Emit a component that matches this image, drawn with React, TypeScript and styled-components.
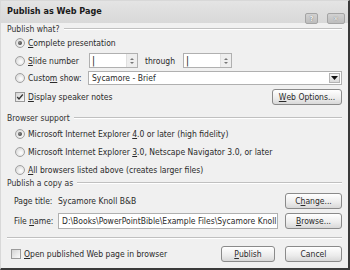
import React from 'react'
import styled, { createGlobalStyle } from 'styled-components'

const GlobalStyle = createGlobalStyle`
  html, body {
    margin: 0;
    padding: 0;
    background: #ffffff;
  }
  * {
    box-sizing: border-box;
  }
`

function Radio({ checked }: { checked?: boolean }) {
  return (
    <StyledRadio>
      {checked && <span className={'dot'} />}
    </StyledRadio>
  )
}

function Check({ checked }: { checked?: boolean }) {
  return (
    <StyledCheck>
      {checked && (
        <svg width="8" height="8" viewBox="0 0 8 8">
          <path d="M1.2 4 L3 6 L6.8 1.5" fill="none" stroke="#333" strokeWidth="1.3" />
        </svg>
      )}
    </StyledCheck>
  )
}

function Spin({ width }: { width: number }) {
  return (
    <SpinBox width={width}>
      <div className={'caret'}>|</div>
      <div className={'arrows'}>
        <svg width="6" height="10" viewBox="0 0 6 10">
          <path d="M1 4 L3 2 L5 4 Z M1 6 L3 8 L5 6 Z" fill="#777" />
        </svg>
      </div>
    </SpinBox>
  )
}

function App() {
  return (
    <>
      <GlobalStyle />
      <Dialog>
        <TitleBar>
          <span className={'title'}>Publish as Web Page</span>
          <div className={'controls'}>
            <CaptionButton width={13}>?</CaptionButton>
            <CaptionButton width={18}>✕</CaptionButton>
          </div>
        </TitleBar>
        <Body>
          <GroupHeader>Publish what?</GroupHeader>
          <Group>
            <Row height={14} top={1}>
              <Radio checked />
              <Label>
                <u>C</u>omplete presentation
              </Label>
            </Row>
            <Row height={15} top={3}>
              <OptionLabel width={74}>
                <Radio />
                <Label>
                  <u>S</u>lide number
                </Label>
              </OptionLabel>
              <Spin width={49} />
              <Through>through</Through>
              <Spin width={49} />
            </Row>
            <Row height={14} top={3}>
              <OptionLabel width={73}>
                <Radio />
                <Label>
                  Custo<u>m</u> show:
                </Label>
              </OptionLabel>
              <SelectBox>
                <span>Sycamore - Brief</span>
                <div className={'drop'}>
                  <svg width="7" height="4" viewBox="0 0 7 4">
                    <path d="M0 0 L7 0 L3.5 4 Z" fill="#111" />
                  </svg>
                </div>
              </SelectBox>
            </Row>
            <Row height={16} top={4}>
              <Check checked />
              <Label>
                <u>D</u>isplay speaker notes
              </Label>
              <Spacer />
              <Button width={70}>
                <u>W</u>eb Options...
              </Button>
            </Row>
          </Group>

          <GroupHeader top={7}>Browser support</GroupHeader>
          <Group>
            <Row height={14} top={3}>
              <Radio checked />
              <Label>
                Microsoft Internet Explorer <u>4</u>.0 or later (high fidelity)
              </Label>
            </Row>
            <Row height={14} top={4}>
              <Radio />
              <Label>
                Microsoft Internet Explorer <u>3</u>.0, Netscape Navigator 3.0, or later
              </Label>
            </Row>
            <Row height={14} top={4}>
              <Radio />
              <Label>
                <u>A</u>ll browsers listed above (creates larger files)
              </Label>
            </Row>
          </Group>

          <GroupHeader>Publish a copy as</GroupHeader>
          <Group indent={7}>
            <Row height={15} top={4}>
              <FieldLabel>Page title:</FieldLabel>
              <span>Sycamore Knoll B&amp;B</span>
              <Spacer />
              <Button width={57}>
                C<u>h</u>ange...
              </Button>
            </Row>
            <Row height={16} top={5}>
              <FieldLabel>
                File <u>n</u>ame:
              </FieldLabel>
              <TextBox>
                <span>D:\Books\PowerPointBible\Example Files\Sycamore Knoll B&amp;B</span>
              </TextBox>
              <Spacer />
              <Button width={57}>
                <u>B</u>rowse...
              </Button>
            </Row>
          </Group>

          <Separator />

          <Row height={17} top={6} style={{ paddingLeft: 4 }}>
            <Check />
            <Label>
              <u>O</u>pen published Web page in browser
            </Label>
            <Spacer />
            <Button width={54}>
              <u>P</u>ublish
            </Button>
            <Button width={57} style={{ marginLeft: 10 }}>
              Cancel
            </Button>
          </Row>
        </Body>
      </Dialog>
    </>
  )
}

export default App

const Dialog = styled.div`
  width: 350px;
  height: 270px;
  display: flex;
  flex-direction: column;
  background: #f0f0f0;
  border-top: 1px solid #d8d8d8;
  border-left: 1px solid #d8d8d8;
  border-right: 2px solid #3a3a3a;
  border-bottom: 2px solid #3a3a3a;
  font-family: 'DejaVu Sans Condensed', 'DejaVu Sans', sans-serif;
  font-size: 8.5px;
  color: #2a2a2a;
  overflow: hidden;
`

const TitleBar = styled.div`
  height: 22px;
  flex-shrink: 0;
  display: flex;
  align-items: center;
  padding: 0 3px 0 6px;
  background: linear-gradient(#e4e4e4, #d8d8d8);

  .title {
    font-size: 9px;
    font-weight: bold;
    color: #1a1a1a;
    margin-top: -2px;
  }

  .controls {
    margin-left: auto;
    align-self: flex-end;
    margin-bottom: -1px;
    display: flex;
    gap: 9px;
  }
`

const CaptionButton = styled.div<{ width: number }>`
  width: ${({ width }) => width}px;
  height: 11px;
  border: 1px solid #a4a4a4;
  border-radius: 2px;
  background: linear-gradient(#d2d2d2, #bdbdbd);
  color: #f4f4f4;
  font-size: 7px;
  font-weight: bold;
  display: flex;
  align-items: center;
  justify-content: center;
  text-shadow: 0 0 1px #555;
`

const Body = styled.div`
  display: flex;
  flex-direction: column;
  padding: 0 6px 0 6px;
`

const GroupHeader = styled.div<{ top?: number }>`
  display: flex;
  align-items: center;
  height: 12px;
  margin-top: ${({ top }) => top || 0}px;
  gap: 4px;
  color: #333;

  &::after {
    content: '';
    flex: 1;
    height: 0;
    border-top: 1px solid #c0c0c0;
    border-bottom: 1px solid #ffffff;
  }
`

const Group = styled.div<{ indent?: number }>`
  display: flex;
  flex-direction: column;
  padding-left: ${({ indent }) => (indent === undefined ? 8 : indent)}px;
`

const Row = styled.div<{ height: number; top?: number }>`
  display: flex;
  align-items: center;
  height: ${({ height }) => height}px;
  margin-top: ${({ top }) => top || 0}px;
  white-space: nowrap;
`

const OptionLabel = styled.div<{ width: number }>`
  display: flex;
  align-items: center;
  width: ${({ width }) => width}px;
  flex-shrink: 0;
`

const Label = styled.span`
  margin-left: 3px;
  white-space: nowrap;
`

const Through = styled.span`
  margin-left: 7px;
  width: 38px;
  flex-shrink: 0;
`

const FieldLabel = styled.span`
  width: 44px;
  flex-shrink: 0;
  white-space: nowrap;
`

const Spacer = styled.div`
  flex: 1;
`

const StyledRadio = styled.div`
  width: 10px;
  height: 10px;
  flex-shrink: 0;
  border-radius: 50%;
  border: 1px solid #a0a0a0;
  background: radial-gradient(circle at 60% 60%, #ffffff, #d0d0d0);
  display: flex;
  align-items: center;
  justify-content: center;

  .dot {
    width: 4px;
    height: 4px;
    border-radius: 50%;
    background: radial-gradient(circle at 40% 40%, #8a8a8a, #2c2c2c);
  }
`

const StyledCheck = styled.div`
  width: 10px;
  height: 10px;
  flex-shrink: 0;
  border: 1px solid #9a9a9a;
  background: linear-gradient(135deg, #d4d4d4, #fbfbfb);
  display: flex;
  align-items: center;
  justify-content: center;
`

const SpinBox = styled.div<{ width: number }>`
  width: ${({ width }) => width}px;
  height: 15px;
  flex-shrink: 0;
  border: 1px solid #b0b0b0;
  background: #ffffff;
  display: flex;
  align-items: center;

  .caret {
    flex: 1;
    padding-left: 2px;
    font-size: 10px;
    color: #222;
  }

  .arrows {
    width: 11px;
    height: 13px;
    border-left: 1px solid #e0e0e0;
    background: #eeeeee;
    display: flex;
    align-items: center;
    justify-content: center;
  }
`

const SelectBox = styled.div`
  flex: 1;
  height: 14px;
  border: 1px solid #b0b0b0;
  background: #ffffff;
  display: flex;
  align-items: center;
  padding-left: 3px;

  span {
    flex: 1;
  }

  .drop {
    width: 11px;
    height: 10px;
    margin-right: 1px;
    border: 1px solid #b4b4b4;
    background: linear-gradient(#f6f6f6, #dadada);
    display: flex;
    align-items: center;
    justify-content: center;
  }
`

const TextBox = styled.div`
  width: 220px;
  height: 16px;
  flex-shrink: 0;
  border: 1px solid #b0b0b0;
  background: #ffffff;
  display: flex;
  align-items: center;
  padding-left: 3px;
  overflow: hidden;
  white-space: nowrap;
`

const Button = styled.div<{ width: number }>`
  width: ${({ width }) => width}px;
  height: 16px;
  flex-shrink: 0;
  border: 1px solid #8a8a8a;
  border-radius: 3px;
  background: linear-gradient(#ffffff, #ececec 60%, #d8d8d8);
  display: flex;
  align-items: center;
  justify-content: center;
  white-space: nowrap;
`

const Separator = styled.div`
  margin-top: 8px;
  height: 0;
  border-top: 1px solid #c0c0c0;
  border-bottom: 1px solid #ffffff;
`
